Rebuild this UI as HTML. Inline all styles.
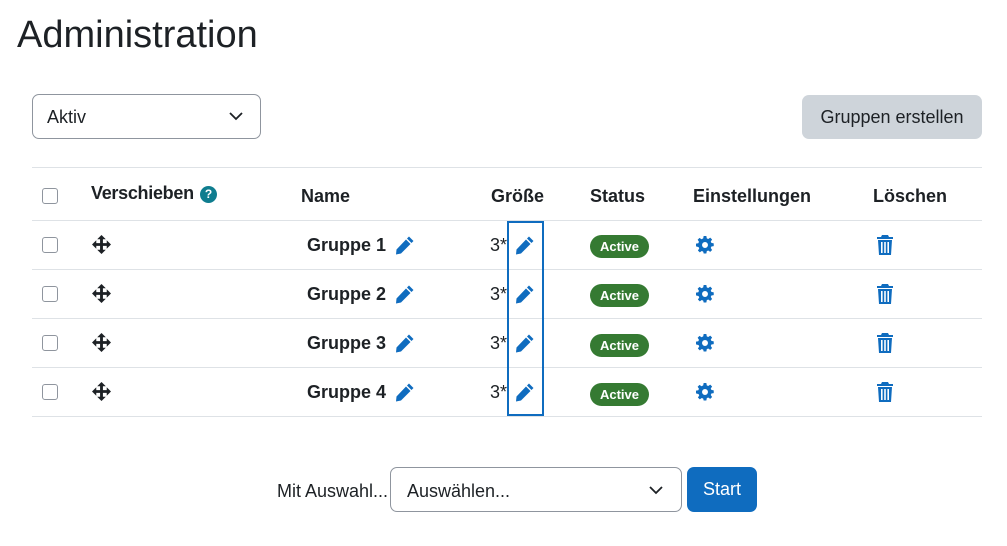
<!DOCTYPE html>
<html><head><meta charset="utf-8"><style>
*{margin:0;padding:0;box-sizing:border-box}
body{width:1007px;height:546px;background:#fff;font-family:"Liberation Sans",sans-serif;color:#1d2125;position:relative;overflow:hidden}
.a{position:absolute;white-space:nowrap}
.sel{position:absolute;border:1px solid #8f959e;border-radius:7px;background:#fff;font-size:18px}
.line{position:absolute;left:32px;width:950px;height:1px;background:#dee2e6}
.cb{position:absolute;left:42px;width:16px;height:16px;border:1px solid #8f959e;border-radius:3px;background:#fff}
.th{position:absolute;font-weight:bold;font-size:18px;top:186px}
.g{position:absolute;left:307px;font-weight:bold;font-size:18px}
.badge{position:absolute;left:590px;width:59px;height:23px;border-radius:12px;background:#357a32;color:#fff;font-weight:bold;font-size:13px;text-align:center;line-height:23px}
.n{position:absolute;left:490px;font-size:18px}
</style></head><body>
<div class="a" style="left:17px;top:14px;font-size:38px">Administration</div>
<div class="sel" style="left:32px;top:94px;width:229px;height:45px"><span class="a" style="left:14px;top:12px">Aktiv</span>
<svg class="a" style="left:196px;top:16px" width="14" height="10" viewBox="0 0 14 10"><path d="M1 2l6 6 6-6" fill="none" stroke="#1d2125" stroke-width="1.8"/></svg></div>
<div class="a" style="left:802px;top:95px;width:180px;height:44px;background:#ced4da;border-radius:7px;font-size:18px;text-align:center;line-height:44px">Gruppen erstellen</div>

<div class="line" style="top:167px"></div>
<div class="line" style="top:220px"></div>
<div class="line" style="top:269px"></div>
<div class="line" style="top:318px"></div>
<div class="line" style="top:367px"></div>
<div class="line" style="top:416px"></div>

<div class="cb" style="top:188px"></div>
<div class="th" style="left:91px;top:183px;letter-spacing:-0.3px">Verschieben</div>
<div class="a" style="left:200px;top:186px;width:17px;height:17px;border-radius:50%;background:#0f7d8f;color:#fff;font-size:12px;font-weight:bold;text-align:center;line-height:17px">?</div>
<div class="th" style="left:301px">Name</div>
<div class="th" style="left:491px">Größe</div>
<div class="th" style="left:590px">Status</div>
<div class="th" style="left:693px">Einstellungen</div>
<div class="th" style="left:873px">Löschen</div>

<div class="a" style="left:507px;top:221px;width:37px;height:195px;border:2px solid #0f6cbf"></div>

<div class="cb" style="top:237px"></div><div class="cb" style="top:286px"></div><div class="cb" style="top:335px"></div><div class="cb" style="top:384px"></div>

<svg width="0" height="0" style="position:absolute"><defs>
<symbol id="mv" viewBox="0 0 20 20"><path d="M10 0l4.5 4.5h-3v4h4v-3L20 10l-4.5 4.5v-3h-4v4h3L10 20l-4.5-4.5h3v-4h-4v3L0 10l4.5-4.5v3h4v-4h-3z" fill="#1d2125"/></symbol>
<symbol id="pen" viewBox="0 0 20 20"><path d="M14 1.5l4.5 4.5-2 2L12 3.5zM11 4.5l4.5 4.5L6 18.5 1 19.5 1.5 14.5z" fill="#0f6cbf"/></symbol>
<symbol id="gear" viewBox="0 0 20 20"><path d="M8.5 0h3l.5 2.6 1.6.7 2.2-1.5 2.1 2.1-1.5 2.2.7 1.6 2.6.5v3l-2.6.5-.7 1.6 1.5 2.2-2.1 2.1-2.2-1.5-1.6.7-.5 2.6h-3L8 17.4l-1.6-.7-2.2 1.5-2.1-2.1 1.5-2.2-.7-1.6L0 11.5v-3l2.6-.5.7-1.6-1.5-2.2 2.1-2.1 2.2 1.5L8 2.6zM10 6.7a3.3 3.3 0 100 6.6 3.3 3.3 0 100-6.6z" fill="#0f6cbf" fill-rule="evenodd"/></symbol>
<symbol id="trash" viewBox="0 0 16 20"><path d="M5 0h6l1 2h4v2H0V2h4zM1 5h14l-1 15H2zM4 7v11h1.6V7zM7.2 7v11h1.6V7zM10.4 7v11H12V7z" fill="#0f6cbf" fill-rule="evenodd"/></symbol>
</defs></svg>

<svg class="a" style="left:92px;top:235px" width="19" height="19"><use href="#mv"/></svg>
<svg class="a" style="left:92px;top:284px" width="19" height="19"><use href="#mv"/></svg>
<svg class="a" style="left:92px;top:333px" width="19" height="19"><use href="#mv"/></svg>
<svg class="a" style="left:92px;top:382px" width="19" height="19"><use href="#mv"/></svg>

<div class="g" style="top:235px">Gruppe 1</div><div class="g" style="top:284px">Gruppe 2</div><div class="g" style="top:333px">Gruppe 3</div><div class="g" style="top:382px">Gruppe 4</div>
<svg class="a" style="left:395px;top:235px" width="20" height="20"><use href="#pen"/></svg>
<svg class="a" style="left:395px;top:284px" width="20" height="20"><use href="#pen"/></svg>
<svg class="a" style="left:395px;top:333px" width="20" height="20"><use href="#pen"/></svg>
<svg class="a" style="left:395px;top:382px" width="20" height="20"><use href="#pen"/></svg>

<div class="n" style="top:235px">3*</div><div class="n" style="top:284px">3*</div><div class="n" style="top:333px">3*</div><div class="n" style="top:382px">3*</div>
<svg class="a" style="left:515px;top:235px" width="20" height="20"><use href="#pen"/></svg>
<svg class="a" style="left:515px;top:284px" width="20" height="20"><use href="#pen"/></svg>
<svg class="a" style="left:515px;top:333px" width="20" height="20"><use href="#pen"/></svg>
<svg class="a" style="left:515px;top:382px" width="20" height="20"><use href="#pen"/></svg>

<div class="badge" style="top:235px">Active</div><div class="badge" style="top:284px">Active</div><div class="badge" style="top:334px">Active</div><div class="badge" style="top:383px">Active</div>

<svg class="a" style="left:696px;top:236px" width="18" height="18"><use href="#gear"/></svg>
<svg class="a" style="left:696px;top:285px" width="18" height="18"><use href="#gear"/></svg>
<svg class="a" style="left:696px;top:334px" width="18" height="18"><use href="#gear"/></svg>
<svg class="a" style="left:696px;top:383px" width="18" height="18"><use href="#gear"/></svg>

<svg class="a" style="left:877px;top:235px" width="16" height="20"><use href="#trash"/></svg>
<svg class="a" style="left:877px;top:284px" width="16" height="20"><use href="#trash"/></svg>
<svg class="a" style="left:877px;top:333px" width="16" height="20"><use href="#trash"/></svg>
<svg class="a" style="left:877px;top:382px" width="16" height="20"><use href="#trash"/></svg>

<div class="a" style="left:277px;top:481px;font-size:18px">Mit Auswahl...</div>
<div class="sel" style="left:390px;top:467px;width:292px;height:45px"><span class="a" style="left:16px;top:13px">Auswählen...</span>
<svg class="a" style="left:258px;top:17px" width="14" height="10" viewBox="0 0 14 10"><path d="M1 2l6 6 6-6" fill="none" stroke="#1d2125" stroke-width="1.8"/></svg></div>
<div class="a" style="left:687px;top:467px;width:70px;height:45px;background:#0f6cbf;border-radius:7px;color:#fff;font-size:18px;text-align:center;line-height:45px">Start</div>
</body></html>
